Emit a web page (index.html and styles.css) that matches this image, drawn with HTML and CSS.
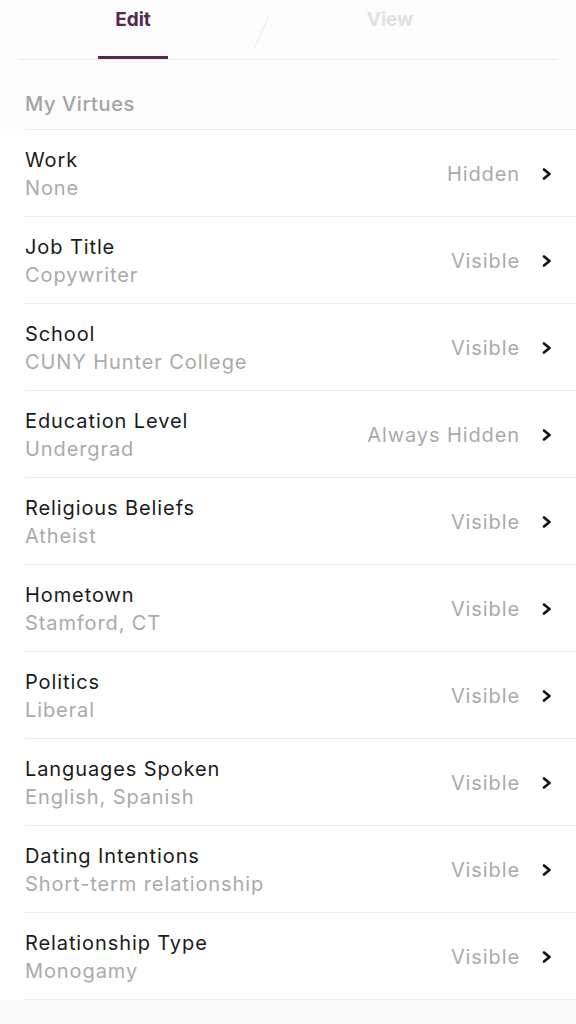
FILE: index.html
```html
<!DOCTYPE html>
<html lang="en">
  <head>
    <meta charset="UTF-8" />
    <meta name="viewport" content="width=device-width, initial-scale=1.0" />
    <title>My Virtues</title>
    <link rel="stylesheet" href="styles.css">
  </head>
  <body>
    <div class="top">
      <nav class="tabs">
        <div class="tab active">
          <span>Edit</span>
          <i class="tab-bar"></i>
        </div>
        <span class="tab-divider"></span>
        <div class="tab">
          <span>View</span>
        </div>
      </nav>
      <h2 class="section-title">My Virtues</h2>
    </div>

    <ul class="list">
      <li class="row">
        <div class="info"><div class="name">Work</div><div class="value">None</div></div>
        <div class="status">Hidden</div>
        <svg class="chevron" viewBox="0 0 10 12"><path d="M2 1.5 L7.5 6 L2 10.5" /></svg>
      </li>
      <li class="row">
        <div class="info"><div class="name">Job Title</div><div class="value">Copywriter</div></div>
        <div class="status">Visible</div>
        <svg class="chevron" viewBox="0 0 10 12"><path d="M2 1.5 L7.5 6 L2 10.5" /></svg>
      </li>
      <li class="row">
        <div class="info"><div class="name">School</div><div class="value">CUNY Hunter College</div></div>
        <div class="status">Visible</div>
        <svg class="chevron" viewBox="0 0 10 12"><path d="M2 1.5 L7.5 6 L2 10.5" /></svg>
      </li>
      <li class="row">
        <div class="info"><div class="name">Education Level</div><div class="value">Undergrad</div></div>
        <div class="status">Always Hidden</div>
        <svg class="chevron" viewBox="0 0 10 12"><path d="M2 1.5 L7.5 6 L2 10.5" /></svg>
      </li>
      <li class="row">
        <div class="info"><div class="name">Religious Beliefs</div><div class="value">Atheist</div></div>
        <div class="status">Visible</div>
        <svg class="chevron" viewBox="0 0 10 12"><path d="M2 1.5 L7.5 6 L2 10.5" /></svg>
      </li>
      <li class="row">
        <div class="info"><div class="name">Hometown</div><div class="value">Stamford, CT</div></div>
        <div class="status">Visible</div>
        <svg class="chevron" viewBox="0 0 10 12"><path d="M2 1.5 L7.5 6 L2 10.5" /></svg>
      </li>
      <li class="row">
        <div class="info"><div class="name">Politics</div><div class="value">Liberal</div></div>
        <div class="status">Visible</div>
        <svg class="chevron" viewBox="0 0 10 12"><path d="M2 1.5 L7.5 6 L2 10.5" /></svg>
      </li>
      <li class="row">
        <div class="info"><div class="name">Languages Spoken</div><div class="value">English, Spanish</div></div>
        <div class="status">Visible</div>
        <svg class="chevron" viewBox="0 0 10 12"><path d="M2 1.5 L7.5 6 L2 10.5" /></svg>
      </li>
      <li class="row">
        <div class="info"><div class="name">Dating Intentions</div><div class="value">Short-term relationship</div></div>
        <div class="status">Visible</div>
        <svg class="chevron" viewBox="0 0 10 12"><path d="M2 1.5 L7.5 6 L2 10.5" /></svg>
      </li>
      <li class="row">
        <div class="info"><div class="name">Relationship Type</div><div class="value">Monogamy</div></div>
        <div class="status">Visible</div>
        <svg class="chevron" viewBox="0 0 10 12"><path d="M2 1.5 L7.5 6 L2 10.5" /></svg>
      </li>
    </ul>
  </body>
</html>
```

FILE: styles.css
```css
:root {
  --plum: #55294f;
  --ink: #1a1a1c;
  --muted: #aaaaaa;
  --line: #ececec;
}

body {
  margin: 0;
  font-family: Inter, "Noto Sans", Arial, sans-serif;
  background-color: #f9f9f9;
  color: var(--ink);
}

.top {
  background-color: #fdfcfd;
}

/* Edit / View switcher */
.tabs {
  display: flex;
  align-items: stretch;
  height: 60px;
  margin: 0 18px;
  border-bottom: 1px solid var(--line);
  box-sizing: border-box;
}

.tab {
  width: 256px;
  display: flex;
  flex-direction: column;
  align-items: center;
  font-size: 19px;
  font-weight: 700;
  line-height: 28px;
  padding-top: 6px;
  box-sizing: border-box;
  color: #e2e0e2;
}

.tab:first-child {
  margin-left: -13px;
}

.tab.active {
  color: var(--plum);
}

.tab-bar {
  margin-top: auto;
  width: 70px;
  height: 3px;
  background-color: var(--plum);
}

.tab-divider {
  width: 1px;
  height: 36px;
  margin-top: 14px;
  background-color: #ececec;
  transform: rotate(23deg);
}

.section-title {
  margin: 0;
  padding: 30px 25px 11px;
  font-size: 20px;
  font-weight: 500;
  line-height: 28px;
  letter-spacing: 0.6px;
  color: #a3a3a3;
}

/* Virtue rows */
.list {
  list-style: none;
  margin: 0;
  padding: 0 0 0 25px;
  background-color: #fff;
  letter-spacing: 0.9px;
}

.row {
  display: flex;
  align-items: center;
  height: 87px;
  padding: 2px 24px 0 0;
  border-top: 1px solid var(--line);
  box-sizing: border-box;
}

.row:last-child {
  height: 88px;
  border-bottom: 1px solid var(--line);
}

.info {
  flex: 1;
  font-size: 20px;
  line-height: 28px;
}

.name {
  color: var(--ink);
}

.value {
  color: var(--muted);
}

.status {
  font-size: 20px;
  color: var(--muted);
  margin-right: 22px;
}

.chevron {
  width: 10px;
  height: 12px;
  fill: none;
  stroke: #111;
  stroke-width: 2.6;
  stroke-linecap: round;
  stroke-linejoin: round;
}
```
